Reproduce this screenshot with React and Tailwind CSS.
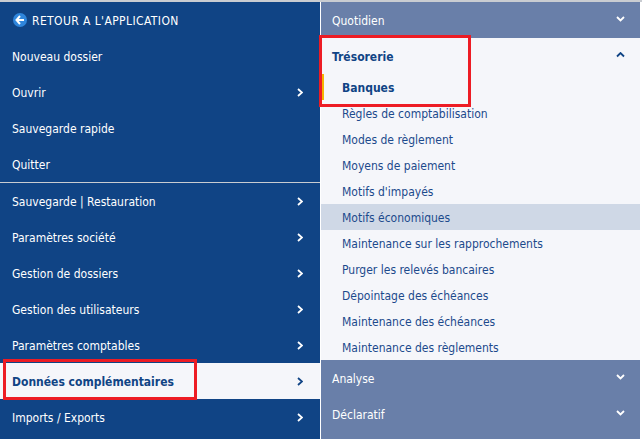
const Chevron = ({ dir = "right", className = "" }) => {
  const d = { right: "M1 1 L5 4.5 L1 8", down: "M1 1 L4.5 4.5 L8 1", up: "M1 4.5 L4.5 1 L8 4.5" }[dir];
  const s = dir === "right" ? [6, 9] : [9, 6];
  return (
    <svg width={s[0]} height={s[1]} viewBox={`0 0 ${s[0]} ${s[1]}`} className={className}>
      <path d={d} fill="none" stroke="currentColor" strokeWidth="1.8" />
    </svg>
  );
};

const LeftRow = ({ label, arrow = true, active = false }) => (
  <div className={`h-9 flex items-center pl-3 pr-[17px] justify-between ${active ? "bg-[#f5f6fa] text-[#104485] font-bold" : "text-white"}`}>
    <span className="mt-[2px]">{label}</span>
    {arrow && <Chevron className="mt-[1px]" />}
  </div>
);

const Band = ({ label }) => (
  <div className="h-9 flex items-center justify-between pl-[11px] pr-[15px] text-white">
    <span className="mt-[2px]">{label}</span>
    <Chevron dir="down" className="-mt-0.5" />
  </div>
);

const subs = [
  "Règles de comptabilisation",
  "Modes de règlement",
  "Moyens de paiement",
  "Motifs d'impayés",
  "Motifs économiques",
  "Maintenance sur les rapprochements",
  "Purger les relevés bancaires",
  "Dépointage des échéances",
  "Maintenance des échéances",
  "Maintenance des règlements",
];

export default function App() {
  return (
    <div className="relative w-[642px] h-[439px] overflow-hidden bg-white text-[12px] font-['DejaVu_Sans_Condensed','DejaVu_Sans',sans-serif]">
      <div className="h-[2px] bg-[#c9ccd1]" />
      <div className="flex h-[437px]">
        <div className="w-[320px] bg-[#104485] shrink-0">
          <div className="h-9 flex items-center pl-[13px] text-white">
            <svg width="14" height="14" viewBox="0 0 14 14" className="mr-[5px]">
              <circle cx="7" cy="7" r="7" fill="#2f86dc" />
              <path d="M7 3 L3.5 7 L7 11 M3.5 7 H11" fill="none" stroke="white" strokeWidth="2" />
            </svg>
            <span className="mt-[2px] tracking-[0.4px]">RETOUR A L'APPLICATION</span>
          </div>
          <LeftRow label="Nouveau dossier" arrow={false} />
          <LeftRow label="Ouvrir" />
          <LeftRow label="Sauvegarde rapide" arrow={false} />
          <LeftRow label="Quitter" arrow={false} />
          <div className="h-[1px] bg-[#c9ccd1]" />
          <LeftRow label="Sauvegarde | Restauration" />
          <LeftRow label="Paramètres société" />
          <LeftRow label="Gestion de dossiers" />
          <LeftRow label="Gestion des utilisateurs" />
          <LeftRow label="Paramètres comptables" />
          <LeftRow label="Données complémentaires" active />
          <LeftRow label="Imports / Exports" />
        </div>
        <div className="w-[319px] ml-[1px] bg-[#697fa9] shrink-0">
          <Band label="Quotidien" />
          <div className="bg-[#f5f6fa] h-[322px]">
            <div className="h-9 flex items-center justify-between pl-[11px] pr-[15px] text-[#104485] font-bold">
              <span className="mt-[2px]">Trésorerie</span>
              <Chevron dir="up" className="text-[#104485] -mt-0.5" />
            </div>
            <div className="h-[26px] flex items-center pl-[21px] text-[#104485] font-bold border-l-[3px] border-[#f5b400]">
              <span className="mt-[2px] -ml-[3px]">Banques</span>
            </div>
            {subs.map((s) => (
              <div key={s} className={`h-[26px] flex items-center pl-[21px] text-[#1c4a8c] ${s === "Motifs économiques" ? "bg-[#cfd8e6]" : ""}`}>
                <span className="mt-[2px]">{s}</span>
              </div>
            ))}
          </div>
          <Band label="Analyse" />
          <Band label="Déclaratif" />
        </div>
      </div>
      <div className="absolute left-[3px] top-[359px] w-[194px] h-[41px] border-[3px] border-[#ed1c24]" />
      <div className="absolute left-[319px] top-[35px] w-[152px] h-[72px] border-[3px] border-[#ed1c24]" />
    </div>
  );
}
